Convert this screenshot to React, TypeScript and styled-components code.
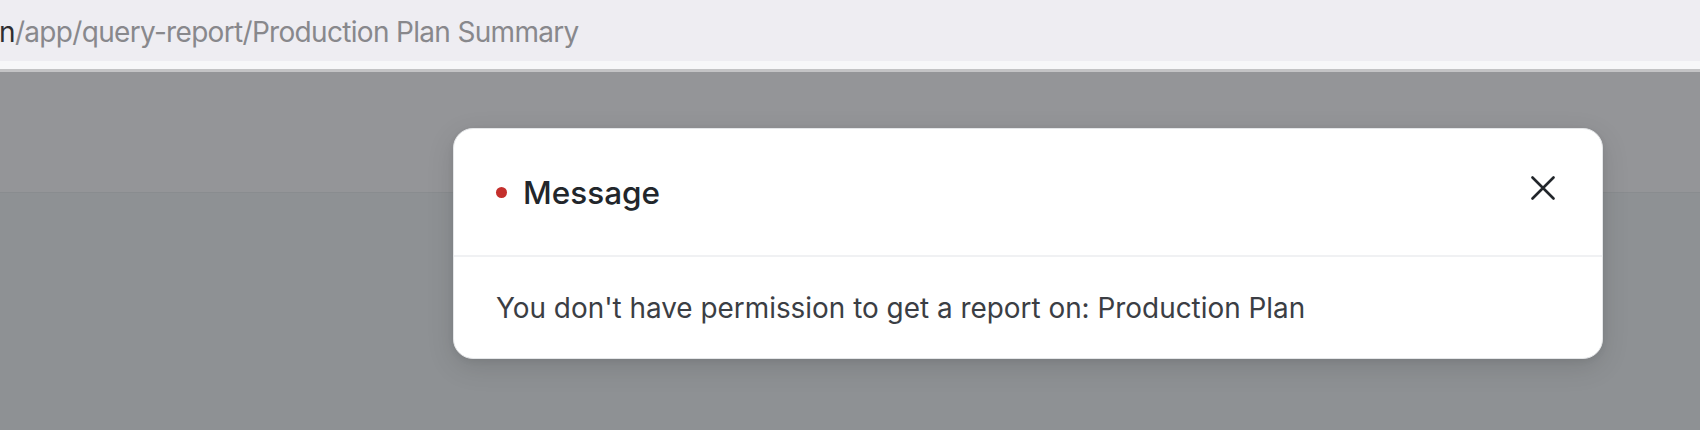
import React from "react";
import styled, { createGlobalStyle } from "styled-components";

const Global = createGlobalStyle`
  html, body { margin: 0; padding: 0; }
  body { width: 1700px; height: 430px; overflow: hidden; font-family: Inter, "Noto Sans", sans-serif; }
  #root { width: 1700px; height: 430px; }
`;

const Screen = styled.div`
  position: relative;
  width: 1700px;
  height: 430px;
  display: flex;
  flex-direction: column;
  background: #8e9194;
`;

const AddressBar = styled.div`
  height: 61px;
  background: #eeedf2;
  display: flex;
  align-items: center;
  overflow: hidden;
`;

const Url = styled.div`
  margin-left: -1px;
  margin-top: 2px;
  font-family: Inter, "Noto Sans", sans-serif;
  font-size: 28px;
  letter-spacing: -0.68px;
  color: #88888c;
  white-space: nowrap;
`;

const Host = styled.span`
  color: #2e2e31;
`;

const BarStrip = styled.div`
  height: 8px;
  background: #f7f7f9;
  border-bottom: 3px solid #c3c3c5;
`;

const NavBand = styled.div`
  height: 120px;
  background: #949598;
  border-bottom: 1px solid #898c8f;
`;

const Backdrop = styled.div`
  flex: 1;
  background: #8e9194;
`;

const Modal = styled.div`
  position: absolute;
  left: 453px;
  top: 128px;
  width: 1150px;
  height: 231px;
  box-sizing: border-box;
  background: #ffffff;
  border: 1px solid #e4e6e8;
  border-radius: 20px;
  box-shadow: 0 8px 28px rgba(0, 0, 0, 0.12), 0 2px 6px rgba(0, 0, 0, 0.06);
  display: flex;
  flex-direction: column;
  overflow: hidden;
`;

const Header = styled.div`
  height: 126px;
  display: flex;
  align-items: center;
  padding: 0 42px 0 42px;
  border-bottom: 2px solid #f0f1f3;
`;

const Dot = styled.span`
  width: 11px;
  height: 11px;
  border-radius: 50%;
  background: #c42f2c;
  margin-right: 16px;
  flex: none;
`;

const Title = styled.h3`
  margin: 0;
  flex: 1;
  font-family: Inter, "Noto Sans", sans-serif;
  font-size: 31.5px;
  font-weight: 500;
  color: #22262b;
  margin-top: 1px;
`;

const CloseButton = styled.button`
  width: 34px;
  height: 34px;
  padding: 0;
  border: none;
  background: transparent;
  display: flex;
  align-items: center;
  justify-content: center;
  margin-top: -9px;
  cursor: pointer;
`;

const Body = styled.div`
  flex: 1;
  display: flex;
  align-items: center;
  padding: 0 42px;
`;

const BodyText = styled.p`
  margin: 0;
  font-family: Inter, "Noto Sans", sans-serif;
  font-size: 27.9px;
  color: #3b3e44;
`;

export default function App() {
  return (
    <>
      <Global />
      <Screen>
        <AddressBar>
          <Url>
            <Host>n</Host>/app/query-report/Production Plan Summary
          </Url>
        </AddressBar>
        <BarStrip />
        <NavBand />
        <Backdrop />
        <Modal>
          <Header>
            <Dot />
            <Title>Message</Title>
            <CloseButton aria-label="Close">
              <svg width="24" height="24" viewBox="0 0 24 24" fill="none">
                <path d="M1.5 1.5 L22.5 22.5 M22.5 1.5 L1.5 22.5" stroke="#22262b" strokeWidth="2.6" strokeLinecap="round" />
              </svg>
            </CloseButton>
          </Header>
          <Body>
            <BodyText>You don't have permission to get a report on: Production Plan</BodyText>
          </Body>
        </Modal>
      </Screen>
    </>
  );
}
